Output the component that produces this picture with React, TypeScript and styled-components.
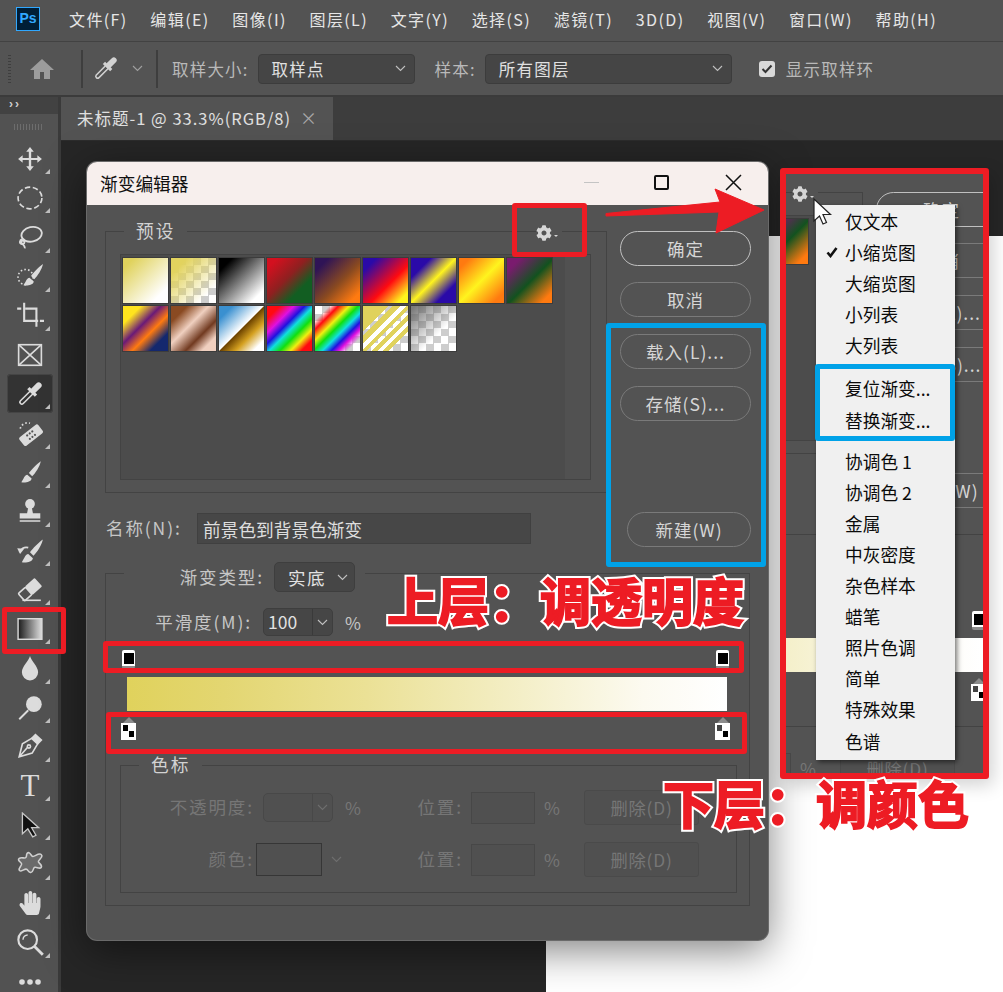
import React from 'react';
import styled, { createGlobalStyle } from 'styled-components';
import { FaCog, FaHandPaper } from 'react-icons/fa';

const cjk = `"Noto Sans CJK SC", "Liberation Sans", sans-serif`;
const checker = 'repeating-conic-gradient(#cdcdcd 0 25%, #fff 0 50%) 0 0/15px 15px';

const GlobalStyle = createGlobalStyle`
    html, body { margin: 0; padding: 0; background: #262626; }
    * { box-sizing: border-box; }
`;

const Page = styled.div`
    position: relative;
    width: 1003px;
    height: 992px;
    overflow: hidden;
    display: flex;
    flex-direction: column;
    font-family: ${cjk};
    background: #262626;
`;

/* ---- menu bar ---- */
const MenuBar = styled.div`
    height: 42px;
    flex: none;
    display: flex;
    align-items: center;
    background: #535353;
    padding: 0 0 4px 16px;
    border-bottom: 1px solid #424242;
`;
const PsLogo = styled.div`
    width: 24px;
    height: 24px;
    margin-right: 29px;
    background: #001e36;
    border: 1.5px solid #31a8ff;
    color: #31a8ff;
    font: bold 14px/21px "Liberation Sans", sans-serif;
    text-align: center;
`;
const MenuItem = styled.span`
    color: #e6e6e6;
    font-size: 16px;
    letter-spacing: 1.4px;
    margin-right: 22.7px;
    white-space: nowrap;
`;

/* ---- options bar ---- */
const OptionsBar = styled.div`
    height: 55px;
    flex: none;
    display: flex;
    align-items: center;
    background: #545454;
    border-bottom: 2px solid #3b3b3b;
`;
const Grip = styled.div`
    width: 3px;
    height: 28px;
    margin-left: 8px;
    background: repeating-linear-gradient(180deg, #3e3e3e 0 1px, transparent 1px 3px);
`;
const VSep = styled.div<{ $ml: number }>`
    width: 2px;
    height: 38px;
    margin-left: ${({ $ml }) => $ml}px;
    background: #3e3e3e;
`;
const OptionIcon = styled.div<{ $ml: number }>`
    display: flex;
    margin-left: ${({ $ml }) => $ml}px;
`;
const OptionLabel = styled.span<{ $ml: number }>`
    margin-left: ${({ $ml }) => $ml}px;
    color: #b9b9b9;
    font-size: 16.5px;
    letter-spacing: 1.2px;
    white-space: nowrap;
`;
const OptionSelect = styled.div<{ $w: number; $ml: number }>`
    width: ${({ $w }) => $w}px;
    height: 30px;
    margin-left: ${({ $ml }) => $ml}px;
    padding: 0 8px 0 13px;
    display: flex;
    align-items: center;
    justify-content: space-between;
    background: #454545;
    border: 1px solid #3c3c3c;
    border-radius: 4px;
    color: #e0e0e0;
    font-size: 16.5px;
    letter-spacing: 1.2px;
`;
const CheckBox = styled.div`
    width: 16px;
    height: 16px;
    margin-left: 27px;
    display: flex;
    align-items: center;
    justify-content: center;
    background: #d9d9d9;
    border-radius: 3px;
`;

/* ---- body ---- */
const Body = styled.div`
    flex: 1;
    display: flex;
    min-height: 0;
`;
const Toolbox = styled.div`
    width: 61px;
    flex: none;
    display: flex;
    flex-direction: column;
    background: #525252;
    border-right: 3px solid #3a3a3a;
`;
const ToolboxHead = styled.div`
    height: 17px;
    flex: none;
    padding-left: 9px;
    background: #424242;
    color: #d0d0d0;
    font: bold 12px/15px "Liberation Sans", sans-serif;
    letter-spacing: 2px;
`;
const ToolGrip = styled.div`
    height: 25px;
    flex: none;
    display: flex;
    align-items: center;
    justify-content: center;
    &::before {
        content: '';
        width: 30px;
        height: 6px;
        background: repeating-linear-gradient(90deg, #6d6d6d 0 1px, transparent 1px 3px);
    }
`;
const Tool = styled.div<{ $active?: boolean; $plain?: boolean }>`
    position: relative;
    width: 46px;
    height: 39.2px;
    flex: none;
    margin-left: 7px;
    display: flex;
    align-items: center;
    justify-content: center;
    color: #dcdcdc;
    border-radius: 4px;
    background: ${({ $active }) => ($active ? '#333333' : 'transparent')};
    box-shadow: ${({ $active }) => ($active ? 'inset 0 0 0 1px #454545' : 'none')};
    &::after {
        content: '';
        display: ${({ $plain }) => ($plain ? 'none' : 'block')};
        position: absolute;
        right: 3px;
        bottom: 4px;
        border-style: solid;
        border-width: 0 0 5px 5px;
        border-color: transparent transparent #c0c0c0 transparent;
    }
`;
const TypeGlyph = styled.span`
    color: #dcdcdc;
    font: 31px/1 "Liberation Serif", serif;
`;

const Workspace = styled.div`
    flex: 1;
    display: flex;
    flex-direction: column;
    min-width: 0;
`;
const TabRow = styled.div`
    height: 44px;
    flex: none;
    display: flex;
    background: #3d3d3d;
    border-bottom: 1px solid #2c2c2c;
`;
const DocTab = styled.div`
    width: 272px;
    padding: 0 15px 2px 16px;
    display: flex;
    align-items: center;
    justify-content: space-between;
    background: #535353;
    color: #e0e0e0;
    font-size: 16.5px;
    letter-spacing: 1px;
    white-space: nowrap;
`;
const TabClose = styled.span`
    color: #a8a8a8;
    font-size: 17px;
`;
const Canvas = styled.div`
    flex: 1;
    display: flex;
    padding: 95px 0 0 485px;
    background: #262626;
`;
const DocPage = styled.div`
    flex: 1;
    background: #fff;
`;

/* ---- gradient editor dialog ---- */
const Dialog = styled.div`
    position: absolute;
    left: 87px;
    top: 162px;
    width: 681px;
    height: 778px;
    display: flex;
    flex-direction: column;
    overflow: hidden;
    background: #535353;
    border-radius: 10px;
    box-shadow: 0 0 0 1px #6a6a6a, 0 10px 40px rgba(0, 0, 0, 0.5);
`;
const TitleBar = styled.div`
    height: 43px;
    flex: none;
    display: flex;
    align-items: center;
    padding: 0 0 2px 13px;
    background: #f7efed;
    color: #111;
    font-size: 17.7px;
`;
const TitleText = styled.span`
    margin-right: 396px;
`;
const MinLine = styled.span`
    width: 15px;
    height: 1px;
    margin-right: 55px;
    background: #c4c4c4;
`;
const MaxBox = styled.span`
    width: 15px;
    height: 15px;
    margin-right: 56px;
    border: 2px solid #111;
    border-radius: 2px;
`;

const DialogContent = styled.div`
    width: 681px;
    flex: none;
    padding: 26px 0 0 18px;
    background: #535353;
`;
const TopArea = styled.div`
    display: flex;
    height: 316px;
`;
const LeftColumn = styled.div`
    width: 502px;
    margin-right: 13px;
`;
const Group = styled.div<{ $h: number }>`
    position: relative;
    height: ${({ $h }) => $h}px;
    border: 1px solid #434343;
`;
const PresetGroup = styled(Group)`
    padding: 22px 15px 0 14px;
`;
const Legend = styled.span<{ $x: number }>`
    position: absolute;
    top: -14px;
    left: ${({ $x }) => $x}px;
    padding: 0 12px;
    background: #535353;
    color: #d2d2d2;
    font-size: 17.7px;
    letter-spacing: 2px;
    line-height: 25px;
`;
const GearSlot = styled.span`
    position: absolute;
    top: -8px;
    left: 430px;
    width: 26px;
    height: 17px;
    display: flex;
    align-items: center;
    color: #d6d6d6;
    background: #535353;
`;
const Caret = styled.span`
    margin: 6px 0 0 2px;
    border-style: solid;
    border-width: 2px 2px 0 2px;
    border-color: #d6d6d6 transparent transparent transparent;
`;
const PresetWell = styled.div`
    height: 226px;
    display: flex;
    justify-content: space-between;
    background: #4c4c4c;
    border: 1px solid #434343;
`;
const SwatchGrid = styled.div`
    display: grid;
    grid-template-columns: repeat(9, 45px);
    grid-auto-rows: 45px;
    gap: 3px;
    padding: 3px 0 0 2px;
`;
const Swatch = styled.div<{ $bg: string }>`
    background: ${({ $bg }) => $bg};
    box-shadow: 0 0 0 1px #3c3c3c;
`;
const WellTrack = styled.div`
    width: 25px;
    background: #515151;
`;
const NameRow = styled.div`
    display: flex;
    align-items: center;
    margin-top: 20px;
    padding-left: 1px;
`;
const FieldLabel = styled.span<{ $w?: number; $dim?: boolean }>`
    flex: none;
    width: ${({ $w }) => ($w ? `${$w}px` : 'auto')};
    padding-bottom: 2px;
    margin-right: -2px;
    color: ${({ $dim }) => ($dim ? '#767676' : '#c6c6c6')};
    font-size: 17.5px;
    letter-spacing: 1.9px;
    text-align: right;
    white-space: nowrap;
`;
const NameLabel = styled(FieldLabel)`
    text-align: left;
    margin-right: 0;
`;
const NameInput = styled.input`
    width: 334px;
    height: 31px;
    padding: 0 5px;
    background: #474747;
    border: 1px solid #404040;
    outline: none;
    color: #dedede;
    font: 17.7px ${cjk};
`;
const ButtonColumn = styled.div`
    width: 131px;
    display: flex;
    flex-direction: column;
    align-items: flex-end;
`;
const PillButton = styled.button<{ $main?: boolean; $w?: number; $mt: number }>`
    flex: none;
    width: ${({ $w }) => $w ?? 131}px;
    height: 35px;
    margin-top: ${({ $mt }) => $mt}px;
    padding: 0;
    background: transparent;
    border: ${({ $main }) => ($main ? '1.5px solid #c0c0c0' : '1px solid #7a7a7a')};
    border-radius: 18px;
    color: #d6d6d6;
    font: 17.5px ${cjk};
    letter-spacing: 1px;
    white-space: nowrap;
`;

const GradientGroup = styled(Group)`
    width: 645px;
    margin-top: 26px;
    padding-top: 34px;
`;
const TypeLegend = styled.div`
    position: absolute;
    top: -12px;
    left: 18px;
    width: 241px;
    height: 30px;
    display: flex;
    align-items: center;
    justify-content: flex-end;
    padding-right: 10px;
    background: #535353;
`;
const SelectBox = styled.div<{ $ml: number; $w: number; $h: number }>`
    flex: none;
    width: ${({ $w }) => $w}px;
    height: ${({ $h }) => $h}px;
    margin-left: ${({ $ml }) => $ml}px;
    display: flex;
    align-items: center;
    justify-content: space-between;
    padding: 0 6px 0 13px;
    background: #464646;
    border: 1px solid #3e3e3e;
    border-radius: 5px;
    color: #e2e2e2;
    font-size: 17.5px;
    letter-spacing: 1.5px;
`;
const ComboBox = styled.div<{ $dim?: boolean }>`
    flex: none;
    width: 70px;
    height: ${({ $dim }) => ($dim ? 29 : 28)}px;
    margin-left: 11px;
    display: grid;
    grid-template-columns: 48px 1fr;
    background: ${({ $dim }) => ($dim ? '#505050' : '#464646')};
    border: 1px solid ${({ $dim }) => ($dim ? '#484848' : '#3e3e3e')};
    border-radius: 5px;
    color: #e2e2e2;
    font-size: 17.5px;
    line-height: 26px;
`;
const ComboValue = styled.span`
    padding-left: 4px;
`;
const ComboArrow = styled.span<{ $dim?: boolean }>`
    display: flex;
    align-items: center;
    justify-content: center;
    border-left: 1px solid ${({ $dim }) => ($dim ? '#484848' : '#3a3a3a')};
`;
const SmoothRow = styled.div`
    display: flex;
    align-items: center;
    height: 28px;
    ${ComboBox} {
        margin-left: 13px;
    }
`;
const Percent = styled.span<{ $dim?: boolean; $ml: number }>`
    margin-left: ${({ $ml }) => $ml}px;
    color: ${({ $dim }) => ($dim ? '#767676' : '#c6c6c6')};
    font-size: 17.3px;
`;
const StopRow = styled.div<{ $mt: number; $h: number; $l: number; $r: number }>`
    height: ${({ $h }) => $h}px;
    margin: ${({ $mt }) => $mt}px ${({ $r }) => $r}px 0 ${({ $l }) => $l}px;
    display: flex;
    justify-content: space-between;
`;
const TopStop = styled.div`
    width: 13px;
    height: 19px;
    background: linear-gradient(180deg, #fff 0 16px, #8c8c8c 16px);
    border-radius: 2px;
    padding: 3px 1.5px 0;
    &::before {
        content: '';
        display: block;
        width: 10px;
        height: 11px;
        background: #000;
    }
`;
const BottomStop = styled.div<{ $flip?: boolean }>`
    width: 15px;
    height: 23px;
    &::before {
        content: '';
        display: block;
        margin: 0 auto;
        width: 0;
        border-style: solid;
        border-width: 0 6px 6px 6px;
        border-color: transparent transparent #8c8c8c transparent;
    }
    &::after {
        content: '';
        display: block;
        width: 15px;
        height: 17px;
        background-color: #fff;
        background-image: ${({ $flip }) =>
            $flip
                ? 'conic-gradient(#fff 0 25%, #000 0 50%, #fff 0 75%, #444 0)'
                : 'conic-gradient(#fff 0 25%, #000 0 50%, #fff 0 75%, #000 0)'};
        background-size: 11px 12px;
        background-position: 2px 2px;
        background-repeat: no-repeat;
        box-shadow: inset 0 0 0 1px #fff;
    }
`;
const ColorBar = styled.div`
    height: 34px;
    margin: 8px 22px 0 21px;
    background: linear-gradient(90deg, #e0d25c 0, #e3d671 16%, #ebe196 40%, #f4efc8 66%, #fcfaf0 86%, #fff 100%);
`;
const StopsGroup = styled(Group)`
    margin: 25px 12px 0 14px;
    padding-top: 24px;
`;
const StopsRow = styled.div`
    height: 32px;
    display: grid;
    grid-template-columns: 131px 153px 56px 10px 64px 49px 115px;
    align-items: center;
    & + & {
        margin-top: 20px;
    }
`;
const ControlCell = styled.div`
    display: flex;
    align-items: center;
`;
const BlankInput = styled.div`
    grid-column: 5;
    height: 32px;
    background: #505050;
    border: 1px solid #474747;
`;
const PercentCell = styled(Percent)`
    margin-left: 9px;
`;
const DeleteButton = styled.div`
    height: 35px;
    display: flex;
    align-items: center;
    justify-content: center;
    background: #505050;
    border: 1px solid #4a4a4a;
    border-radius: 3px;
    color: #767676;
    font-size: 17.3px;
    letter-spacing: 0.8px;
`;
const ColorWell = styled.div`
    width: 66px;
    height: 33px;
    margin-left: 4px;
    margin-right: 9px;
    background: #505050;
    border: 1px solid #363636;
`;

/* ---- annotations ---- */
const CropPanel = styled.div`
    position: absolute;
    left: 780px;
    top: 168px;
    width: 209px;
    height: 611px;
    overflow: hidden;
    background: #535353;
    border: 6px solid #ed1c24;
    border-radius: 3px;
    box-shadow: 4px 6px 18px rgba(0, 0, 0, 0.18);
`;
// the panel shows only a slice of the dialog, labels left of the slice stay hidden
const CropOffset = styled.div`
    margin: -8px 0 0 -443px;
    ${FieldLabel}, ${Legend}, ${NameInput}, ${SelectBox}, ${ComboValue}, ${ControlCell} ${Percent}, ${SmoothRow} ${Percent}, ${StopsRow} + ${StopsRow} {
        visibility: hidden;
    }
`;
const PopMenu = styled.div`
    position: absolute;
    left: 30px;
    top: 31px;
    width: 139px;
    height: 555px;
    padding-top: 1px;
    background: #f0f0f0;
    box-shadow: 2px 2px 5px rgba(0, 0, 0, 0.55);
`;
const PopSection = styled.div<{ $mt?: number }>`
    margin-top: ${({ $mt }) => $mt ?? 0}px;
`;
const PopItem = styled.div`
    position: relative;
    height: 31.1px;
    padding-left: 29px;
    color: #0b0b0b;
    font-size: 17.7px;
    line-height: 31px;
    white-space: nowrap;
`;
const PopCheck = styled.span`
    position: absolute;
    left: 10px;
    top: 10px;
    display: flex;
`;
const Callout = styled.div<{ $x: number; $y: number; $w: number; $h: number; $c: string }>`
    position: absolute;
    left: ${({ $x }) => $x}px;
    top: ${({ $y }) => $y}px;
    width: ${({ $w }) => $w}px;
    height: ${({ $h }) => $h}px;
    border: 5px solid ${({ $c }) => $c};
    border-radius: 3px;
`;
const BigNote = styled.div<{ $x: number; $y: number }>`
    position: absolute;
    left: ${({ $x }) => $x}px;
    top: ${({ $y }) => $y}px;
    z-index: 0;
    color: #ed1c24;
    font-family: ${cjk};
    font-size: 51px;
    font-weight: 700;
    line-height: 60px;
    white-space: pre;
    -webkit-text-stroke: 2px #ed1c24;
    &::before {
        content: attr(data-text);
        position: absolute;
        left: 0;
        top: 0;
        z-index: -1;
        -webkit-text-stroke: 6px #fff;
    }
`;
const ArrowMark = styled.svg`
    position: absolute;
    left: 600px;
    top: 185px;
`;
const CursorMark = styled.svg`
    position: absolute;
    left: 813px;
    top: 198px;
`;

/* ---- icons ---- */
const Chevron = ({ color = '#c0c0c0' }: { color?: string }) => (
    <svg width="11" height="7" viewBox="0 0 11 7" fill="none" stroke={color} strokeWidth="1.1">
        <path d="M1 1l4.5 4.5L10 1" />
    </svg>
);

const Dropper = ({ hole, size = 26, color = '#dcdcdc' }: { hole: string; size?: number; color?: string }) => (
    <svg width={size} height={size} viewBox="0 0 24 24" fill="none" stroke={color}>
        <path d="M4.5 19.5L14 10" strokeWidth="5" strokeLinecap="round" />
        <path d="M4.5 19.5L14 10" strokeWidth="2.2" stroke={hole} strokeLinecap="round" />
        <path d="M10.5 6.5l7 7" strokeWidth="3" />
        <path d="M15 9l5-5" strokeWidth="5.5" strokeLinecap="round" />
    </svg>
);

const brushPath = 'M22 2c-3 2-9 8-11 11l3 3c3-3 7-9 8-14zM9.5 14.5c-2.5.5-3 3-5.5 7 3.5.5 9 0 9.5-3.5z';

const icons: React.ReactNode[] = [
    <svg key="move" width="26" height="26" viewBox="0 0 24 24" fill="currentColor">
        <path d="M12 1l3.5 4.2h-2.4V11h5.7V8.5L23 12l-4.2 3.5V13h-5.7v5.8h2.4L12 23l-3.5-4.2h2.4V13H5.2v2.5L1 12l4.2-3.5V11h5.7V5.2H8.5z" />
    </svg>,
    <svg key="marquee" width="26" height="26" viewBox="0 0 24 24" fill="none" stroke="currentColor" strokeWidth="1.5">
        <ellipse cx="12" cy="12" rx="11" ry="10" strokeDasharray="5 2.4" />
    </svg>,
    <svg key="lasso" width="26" height="26" viewBox="0 0 24 24" fill="none" stroke="currentColor" strokeWidth="1.7">
        <ellipse cx="13.5" cy="9.5" rx="9.5" ry="6.7" transform="rotate(-12 13.5 9.5)" />
        <path d="M5 14c-3 1-3 4-.5 4.5 2 .3 3-1.5 2-2.7-1.2-1.2-3.5 0-2 2 1 1.3 3 2.2 2.8 4.7" />
    </svg>,
    <svg key="quick" width="26" height="26" viewBox="0 0 24 24" fill="currentColor">
        <circle cx="8" cy="13" r="7" fill="none" stroke="currentColor" strokeWidth="1.5" strokeDasharray="1.5 2" />
        <path d={brushPath} transform="translate(2 -1)" />
    </svg>,
    <svg key="crop" width="28" height="28" viewBox="0 0 24 24" fill="none" stroke="currentColor" strokeWidth="1.8">
        <path d="M1 6.5h3.5M7 1.5V17h12M8 6.5h9.5V22M20.5 17H24" />
    </svg>,
    <svg key="frame" width="26" height="26" viewBox="0 0 24 24" fill="none" stroke="currentColor" strokeWidth="1.5">
        <rect x="1.5" y="2.5" width="21" height="19" />
        <path d="M1.5 2.5l21 19M22.5 2.5l-21 19" />
    </svg>,
    <Dropper key="dropper" hole="#333333" />,
    <svg key="heal" width="26" height="26" viewBox="0 0 24 24" fill="currentColor">
        <path d="M3 8a7 7 0 0 1 9-5" fill="none" stroke="currentColor" strokeWidth="1.5" strokeDasharray="1.5 2" />
        <g transform="rotate(-38 13 14)">
            <rect x="2" y="9" width="22" height="10" rx="2" />
            <g fill="#525252">
                <circle cx="10" cy="12" r="1" />
                <circle cx="13" cy="12" r="1" />
                <circle cx="16" cy="12" r="1" />
                <circle cx="10" cy="16" r="1" />
                <circle cx="13" cy="16" r="1" />
                <circle cx="16" cy="16" r="1" />
            </g>
        </g>
    </svg>,
    <svg key="brush" width="26" height="26" viewBox="0 0 24 24" fill="currentColor">
        <path d={brushPath} />
    </svg>,
    <svg key="stamp" width="26" height="26" viewBox="0 0 24 24" fill="currentColor">
        <circle cx="12" cy="5.5" r="4.5" />
        <path d="M10.3 9h3.4l1 5h-5.4zM2.5 14h19v5h-19zM2.5 20.5h19V22h-19z" />
    </svg>,
    <svg key="history" width="28" height="28" viewBox="0 0 24 24" fill="currentColor">
        <path d={brushPath} transform="translate(1 1)" />
        <path d="M3 14c1-3 4-5 7.5-4" fill="none" stroke="currentColor" strokeWidth="1.5" />
        <path d="M1 10.5l6 .5-3.5 4.5z" />
    </svg>,
    <svg key="eraser" width="26" height="26" viewBox="0 0 24 24" fill="currentColor">
        <g transform="rotate(-42 12 11)">
            <rect x="1" y="7" width="9" height="9" rx="1" fill="none" stroke="currentColor" strokeWidth="1.5" />
            <rect x="10" y="6.3" width="12" height="10.4" rx="1" />
        </g>
        <path d="M5 21.5h17" stroke="currentColor" strokeWidth="1.5" />
    </svg>,
    <svg key="gradient" width="26" height="26" viewBox="0 0 24 24">
        <defs>
            <linearGradient id="toolGrad" x1="0" x2="1" y1="0" y2="0">
                <stop offset="0" stopColor="#1a1a1a" />
                <stop offset="1" stopColor="#e0e0e0" />
            </linearGradient>
        </defs>
        <rect x="1" y="2.5" width="22" height="19" fill="url(#toolGrad)" stroke="#dcdcdc" strokeWidth="1.3" />
    </svg>,
    <svg key="drop" width="26" height="26" viewBox="0 0 24 24" fill="currentColor">
        <path d="M12 1c-1 4.5-7.5 9.5-7.5 15a7.5 7.5 0 0 0 15 0C19.5 10.5 13 5.5 12 1z" />
    </svg>,
    <svg key="dodge" width="27" height="27" viewBox="0 0 24 24" fill="currentColor">
        <circle cx="15" cy="9" r="7" />
        <path d="M10 14.5L2 22.5" stroke="currentColor" strokeWidth="1.8" />
    </svg>,
    <svg key="pen" width="26" height="26" viewBox="0 0 24 24" fill="none" stroke="currentColor" strokeWidth="1.5">
        <path d="M17 1.5l5.5 5-3 3-5.5-5z" fill="currentColor" />
        <path d="M13.5 5L5 10 2 22l12-3.5 5-8.5zM2.5 21.5L10 13" />
        <circle cx="11" cy="12.5" r="1.5" />
    </svg>,
    <TypeGlyph key="type">T</TypeGlyph>,
    <svg key="select" width="26" height="26" viewBox="0 0 24 24">
        <path d="M5 1v19l5-4.500L14.500 23l3-1.500-4-7H20z" fill="#111" stroke="#c8c8c8" strokeWidth="1.2" />
    </svg>,
    <svg key="shape" width="27" height="27" viewBox="0 0 24 24">
        <path
            d="M9 3c2-2 3 1 4.500 2.500S19 2 21.500 4s-3 5-2.500 6.500 4 3 2.500 5-4.500-1-6 0-1 5-3.500 4.500-2-3-4-3-5 3-6 1 3-4.500 2-6S0 9 2 7.500s5 .5 6-1 0-2 1-3.500z"
            fill="#6a6a6a"
            stroke="#d0d0d0"
            strokeWidth="1.4"
        />
    </svg>,
    <FaHandPaper key="hand" size={24} />,
    <svg key="zoom" width="28" height="28" viewBox="0 0 24 24" fill="none" stroke="currentColor" strokeWidth="1.8">
        <circle cx="10" cy="10" r="8" />
        <path d="M15.5 15.5L23 23" strokeWidth="2.4" />
        <path d="M6 10a4 4 0 0 1 4-4" strokeWidth="1.2" />
    </svg>,
    <svg key="more" width="26" height="10" viewBox="0 0 26 10" fill="currentColor">
        <circle cx="5" cy="5" r="2.8" />
        <circle cx="13" cy="5" r="2.8" />
        <circle cx="21" cy="5" r="2.8" />
    </svg>,
];

const presets: string[] = [
    'linear-gradient(135deg, #e0d25c 12%, #fff 82%)',
    `linear-gradient(135deg, #e2d35e 18%, rgba(226,211,94,0) 82%), ${checker}`,
    'linear-gradient(135deg, #000 15%, #fff 85%)',
    'linear-gradient(135deg, #d3101f 12%, #8e2020 45%, #125e22 72%)',
    'linear-gradient(135deg, #2f1456 15%, #8a4a20 55%, #ff7a10 88%)',
    'linear-gradient(135deg, #2a0aa8 15%, #ff0a10 58%, #fff41e 88%)',
    'linear-gradient(135deg, #2a0aa8 22%, #fff41e 50%, #2a0aa8 78%)',
    'linear-gradient(135deg, #ff7a10 12%, #fff41e 50%, #ff7a10 88%)',
    'linear-gradient(135deg, #7a1b6e 15%, #12521f 52%, #ff7a10 88%)',
    'linear-gradient(135deg, #ffe41e 20%, #6a1a78 42%, #ff7a10 60%, #14286e 80%)',
    'linear-gradient(135deg, #8a4a22 18%, #f0d0c0 42%, #713a20 66%, #f0d0c0 84%)',
    'linear-gradient(135deg, #3a90d0 15%, #fff 49%, #6e4400 51%, #d4a020 68%, #fff 88%)',
    'linear-gradient(135deg, #ff0a10 14%, #e010e0 30%, #2010e0 42%, #10e0e0 52%, #10e010 64%, #f0f010 76%, #ff0a10 88%)',
    `linear-gradient(135deg, transparent 16%, #ff0a10 26%, #f0f010 38%, #10e010 48%, #10e0e0 58%, #2010e0 68%, #e010e0 76%, transparent 86%), ${checker}`,
    `linear-gradient(135deg, #e0d25c 28%, transparent 28% 33%, #e0d25c 33% 42%, #fff 42% 48%, #e0d25c 48% 54%, transparent 54% 60%, #e0d25c 60% 66%, #fff 66% 72%, #e0d25c 72% 78%, transparent 78%), ${checker}`,
    `linear-gradient(135deg, rgba(100,100,100,0.85) 5%, rgba(120,120,120,0) 62%), ${checker}`,
];

const menuLabels = ['文件(F)', '编辑(E)', '图像(I)', '图层(L)', '文字(Y)', '选择(S)', '滤镜(T)', '3D(D)', '视图(V)', '窗口(W)', '帮助(H)'];

const DialogBody = () => (
    <DialogContent>
        <TopArea>
            <LeftColumn>
                <PresetGroup $h={262}>
                    <Legend $x={18}>预设</Legend>
                    <GearSlot>
                        <FaCog size={16} />
                        <Caret />
                    </GearSlot>
                    <PresetWell>
                        <SwatchGrid>
                            {presets.map((bg) => (
                                <Swatch key={bg} $bg={bg} />
                            ))}
                        </SwatchGrid>
                        <WellTrack />
                    </PresetWell>
                </PresetGroup>
                <NameRow>
                    <NameLabel $w={91}>名称(N):</NameLabel>
                    <NameInput readOnly defaultValue="前景色到背景色渐变" />
                </NameRow>
            </LeftColumn>
            <ButtonColumn>
                <PillButton $main $mt={0}>确定</PillButton>
                <PillButton $mt={16}>取消</PillButton>
                <PillButton $mt={17}>载入(L)...</PillButton>
                <PillButton $mt={17}>存储(S)...</PillButton>
                <PillButton $w={124} $mt={91}>新建(W)</PillButton>
            </ButtonColumn>
        </TopArea>
        <GradientGroup $h={333}>
            <TypeLegend>
                <FieldLabel>渐变类型:</FieldLabel>
                <SelectBox $ml={12} $w={81} $h={30}>
                    实底
                    <Chevron />
                </SelectBox>
            </TypeLegend>
            <SmoothRow>
                <FieldLabel $w={146}>平滑度(M):</FieldLabel>
                <ComboBox>
                    <ComboValue>100</ComboValue>
                    <ComboArrow>
                        <Chevron />
                    </ComboArrow>
                </ComboBox>
                <Percent $ml={12}>%</Percent>
            </SmoothRow>
            <StopRow $mt={14} $h={19} $l={16} $r={20}>
                <TopStop />
                <TopStop />
            </StopRow>
            <ColorBar />
            <StopRow $mt={6} $h={23} $l={15} $r={19}>
                <BottomStop />
                <BottomStop $flip />
            </StopRow>
            <StopsGroup $h={128}>
                <Legend $x={18}>色标</Legend>
                <StopsRow>
                    <FieldLabel $dim>不透明度:</FieldLabel>
                    <ControlCell>
                        <ComboBox $dim>
                            <span />
                            <ComboArrow $dim>
                                <Chevron color="#6e6e6e" />
                            </ComboArrow>
                        </ComboBox>
                        <Percent $dim $ml={12}>%</Percent>
                    </ControlCell>
                    <FieldLabel $dim>位置:</FieldLabel>
                    <BlankInput />
                    <PercentCell $dim $ml={9}>%</PercentCell>
                    <DeleteButton>删除(D)</DeleteButton>
                </StopsRow>
                <StopsRow>
                    <FieldLabel $dim>颜色:</FieldLabel>
                    <ControlCell>
                        <ColorWell />
                        <Chevron color="#6e6e6e" />
                    </ControlCell>
                    <FieldLabel $dim>位置:</FieldLabel>
                    <BlankInput />
                    <PercentCell $dim $ml={9}>%</PercentCell>
                    <DeleteButton>删除(D)</DeleteButton>
                </StopsRow>
            </StopsGroup>
        </GradientGroup>
    </DialogContent>
);

export default function App() {
    return (
        <Page>
            <GlobalStyle />
            <MenuBar>
                <PsLogo>Ps</PsLogo>
                {menuLabels.map((label) => (
                    <MenuItem key={label}>{label}</MenuItem>
                ))}
            </MenuBar>
            <OptionsBar>
                <Grip />
                <OptionIcon $ml={18}>
                    <svg width="26" height="24" viewBox="0 0 26 24" fill="#9c9c9c">
                        <path d="M13 2L1 13h4v9h6v-7h4v7h6v-9h4z" />
                    </svg>
                </OptionIcon>
                <VSep $ml={26} />
                <OptionIcon $ml={10}>
                    <Dropper hole="#545454" size={25} color="#d2d2d2" />
                </OptionIcon>
                <OptionIcon $ml={14}>
                    <Chevron color="#a0a0a0" />
                </OptionIcon>
                <VSep $ml={13} />
                <OptionLabel $ml={14}>取样大小:</OptionLabel>
                <OptionSelect $w={157} $ml={9}>
                    取样点
                    <Chevron />
                </OptionSelect>
                <OptionLabel $ml={20}>样本:</OptionLabel>
                <OptionSelect $w={247} $ml={9}>
                    所有图层
                    <Chevron />
                </OptionSelect>
                <CheckBox>
                    <svg width="12" height="10" viewBox="0 0 12 10" fill="none" stroke="#333" strokeWidth="2">
                        <path d="M1.5 5l3 3 6-6.500" />
                    </svg>
                </CheckBox>
                <OptionLabel $ml={11}>显示取样环</OptionLabel>
            </OptionsBar>
            <Body>
                <Toolbox>
                    <ToolboxHead>››</ToolboxHead>
                    <ToolGrip />
                    {icons.map((icon, i) => (
                        <Tool key={i} $active={i === 6} $plain={i === 5}>
                            {icon}
                        </Tool>
                    ))}
                </Toolbox>
                <Workspace>
                    <TabRow>
                        <DocTab>
                            未标题-1 @ 33.3%(RGB/8)
                            <TabClose>×</TabClose>
                        </DocTab>
                    </TabRow>
                    <Canvas>
                        <DocPage />
                    </Canvas>
                </Workspace>
            </Body>

            <Dialog>
                <TitleBar>
                    <TitleText>渐变编辑器</TitleText>
                    <MinLine />
                    <MaxBox />
                    <svg width="17" height="17" viewBox="0 0 17 17" stroke="#111" strokeWidth="1.5">
                        <path d="M1 1l15 15M16 1L1 16" />
                    </svg>
                </TitleBar>
                <DialogBody />
            </Dialog>

            <CropPanel>
                <CropOffset>
                    <DialogBody />
                </CropOffset>
                <PopMenu>
                    <PopSection>
                        <PopItem>仅文本</PopItem>
                        <PopItem>
                            <PopCheck>
                                <svg width="12" height="11" viewBox="0 0 12 11" fill="none" stroke="#111" strokeWidth="2.6">
                                    <path d="M1.5 5.5l3 3.5L10.5 1" />
                                </svg>
                            </PopCheck>
                            小缩览图
                        </PopItem>
                        <PopItem>大缩览图</PopItem>
                        <PopItem>小列表</PopItem>
                        <PopItem>大列表</PopItem>
                    </PopSection>
                    <PopSection $mt={12}>
                        <PopItem>复位渐变...</PopItem>
                        <PopItem>替换渐变...</PopItem>
                    </PopSection>
                    <PopSection $mt={10}>
                        {['协调色 1', '协调色 2', '金属', '中灰密度', '杂色样本', '蜡笔', '照片色调', '简单', '特殊效果', '色谱'].map((label) => (
                            <PopItem key={label}>{label}</PopItem>
                        ))}
                    </PopSection>
                </PopMenu>
            </CropPanel>

            <CursorMark width="20" height="30" viewBox="0 0 20 30">
                <path d="M1 1v22l5.5-5 3.5 8 3.5-1.500-3.500-8h7.500z" fill="#fff" stroke="#222" strokeWidth="1.2" />
            </CursorMark>
            <ArrowMark width="170" height="55" viewBox="0 0 170 55">
                <path d="M6 28.5v2.5l113-4-3 21 48-23-49-21 5 13z" fill="#ed1c24" stroke="#ed1c24" strokeWidth="1" strokeLinejoin="round" />
            </ArrowMark>

            <Callout $x={2} $y={607} $w={64} $h={47} $c="#ed1c24" />
            <Callout $x={512} $y={203} $w={75} $h={54} $c="#ed1c24" />
            <Callout $x={606} $y={323} $w={160} $h={244} $c="#00a2e8" />
            <Callout $x={815} $y={364} $w={140} $h={77} $c="#00a2e8" />
            <Callout $x={103} $y={641} $w={641} $h={32} $c="#ed1c24" />
            <Callout $x={106} $y={712} $w={641} $h={42} $c="#ed1c24" />

            <BigNote $x={387} $y={569} data-text="上层：调透明度">上层：调透明度</BigNote>
            <BigNote $x={663} $y={772} data-text="下层：调颜色">下层：调颜色</BigNote>
        </Page>
    );
}
